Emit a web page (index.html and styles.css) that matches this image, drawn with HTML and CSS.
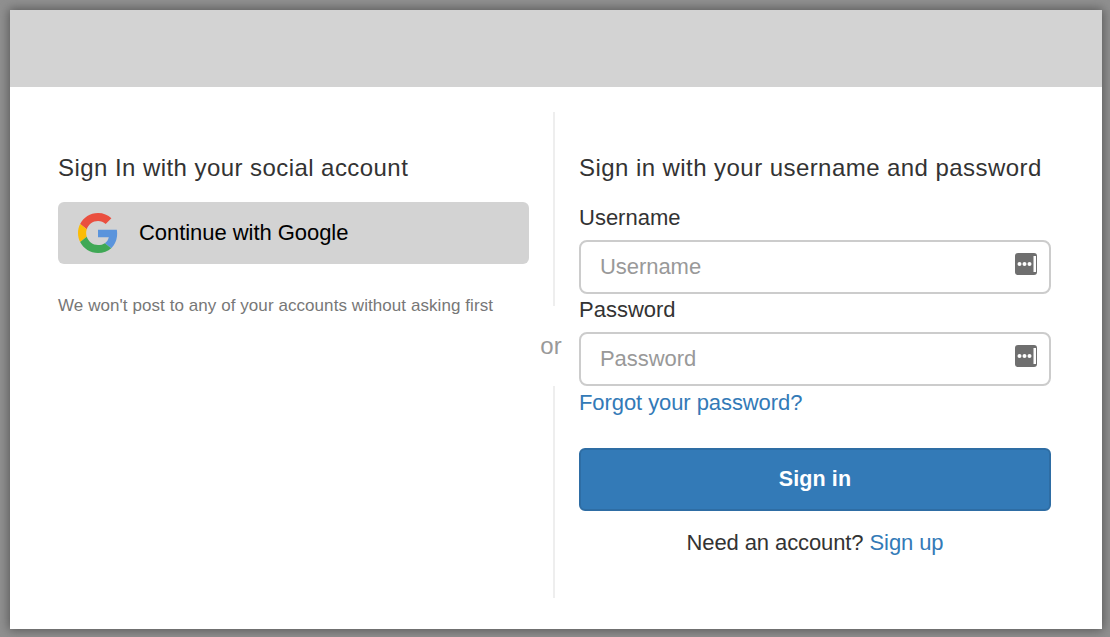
FILE: index.html
```html
<!DOCTYPE html>
<html lang="en">
<head>
  <meta charset="UTF-8" />
  <title>Sign in</title>
  <link rel="stylesheet" href="styles.css">
</head>
<body>

<div class="modal">
  <div class="banner"></div>

  <div class="modal-body">
    <section class="social">
      <h2>Sign In with your social account</h2>
      <button class="google-btn" type="button">
        <svg class="google-icon" viewBox="0 0 48 48" width="40" height="40">
          <path fill="#EA4F3F" d="M24 9.5c3.54 0 6.71 1.22 9.21 3.6l6.85-6.85C35.9 2.38 30.47 0 24 0 14.62 0 6.51 5.38 2.56 13.22l7.98 6.19C12.43 13.72 17.74 9.5 24 9.5z"/>
          <path fill="#5A94DC" d="M46.98 24.55c0-1.57-.15-3.09-.38-4.55H24v9.02h12.94c-.58 2.96-2.26 5.48-4.78 7.18l7.73 6c4.51-4.18 7.09-10.36 7.09-17.65z"/>
          <path fill="#FBBC05" d="M10.53 28.59c-.48-1.45-.76-2.99-.76-4.59s.27-3.14.76-4.59l-7.98-6.19C.92 16.46 0 20.12 0 24c0 3.88.92 7.54 2.56 10.78l7.97-6.19z"/>
          <path fill="#3FA855" d="M24 48c6.48 0 11.93-2.13 15.89-5.81l-7.73-6c-2.15 1.45-4.92 2.3-8.16 2.3-6.26 0-11.57-4.22-13.47-9.91l-7.98 6.19C6.51 42.62 14.62 48 24 48z"/>
        </svg>
        <span>Continue with Google</span>
      </button>
      <p class="note">We won't post to any of your accounts without asking first</p>
    </section>

    <div class="divider"><span class="or">or</span></div>

    <section class="login">
      <h2>Sign in with your username and password</h2>
      <form>
        <label for="username">Username</label>
        <div class="field">
          <input type="text" id="username" placeholder="Username" />
          <svg class="key-icon" viewBox="0 0 22 22" width="22" height="22">
            <rect width="22" height="22" rx="3" fill="#6f6f6f"/>
            <circle cx="4.5" cy="11" r="2" fill="#fff"/>
            <circle cx="9.5" cy="11" r="2" fill="#fff"/>
            <circle cx="14.5" cy="11" r="2" fill="#fff"/>
            <rect x="18.5" y="3" width="2.5" height="16" fill="#fff"/>
          </svg>
        </div>
        <label for="password">Password</label>
        <div class="field">
          <input type="password" id="password" placeholder="Password" />
          <svg class="key-icon" viewBox="0 0 22 22" width="22" height="22">
            <rect width="22" height="22" rx="3" fill="#6f6f6f"/>
            <circle cx="4.5" cy="11" r="2" fill="#fff"/>
            <circle cx="9.5" cy="11" r="2" fill="#fff"/>
            <circle cx="14.5" cy="11" r="2" fill="#fff"/>
            <rect x="18.5" y="3" width="2.5" height="16" fill="#fff"/>
          </svg>
        </div>
        <a class="forgot" href="#">Forgot your password?</a>
        <button class="submit-btn" type="submit">Sign in</button>
        <p class="signup">Need an account? <a href="#">Sign up</a></p>
      </form>
    </section>
  </div>
</div>

</body>
</html>
```

FILE: styles.css
```css
* { box-sizing: border-box; }

html, body {
  height: 100%;
}

body {
  margin: 0;
  padding: 10px 8px 8px 10px;
  background: #909090;
  font-family: "Liberation Sans", Arial, sans-serif;
  color: #333;
  overflow: hidden;
}

.modal {
  height: 619px;
  background: #fff;
  box-shadow: 0 0 10px 1px #555;
  display: flex;
  flex-direction: column;
}

.banner {
  height: 77px;
  background: #d3d3d3;
}

.modal-body {
  flex-grow: 1;
  display: flex;
  padding: 25px 51px 31px 48px;
}

.social {
  width: 471px;
  padding-top: 41px;
}

.login {
  width: 472px;
  padding-top: 41px;
}

h2 {
  margin: 0;
  font-size: 24px;
  font-weight: 400;
  line-height: 30px;
  letter-spacing: 0.44px;
}

.google-btn {
  width: 100%;
  height: 62px;
  margin-top: 19px;
  padding: 0 20px 1px;
  display: flex;
  align-items: center;
  gap: 21px;
  border: none;
  border-radius: 6px;
  background: #d3d3d3;
  color: #000;
  font-family: inherit;
  font-size: 22px;
  letter-spacing: -0.05px;
}

.note {
  margin: 32px 0 0;
  font-size: 17px;
  line-height: 20px;
  letter-spacing: 0.07px;
  color: #777;
}

.divider {
  position: relative;
  width: 2px;
  margin: 0 24px;
  background: #eee;
}

.or {
  position: absolute;
  top: 194px;
  left: -22px;
  width: 40px;
  height: 80px;
  padding-top: 26px;
  background: #fff;
  text-align: center;
  font-size: 24px;
  line-height: 28px;
  color: #999;
}

form {
  display: flex;
  flex-direction: column;
}

label {
  margin-top: 2px;
  font-size: 22px;
  line-height: 28px;
}

form label:first-child {
  margin-top: 21px;
}

.field {
  position: relative;
  margin-top: 8px;
}

input {
  display: block;
  width: 100%;
  height: 54px;
  padding: 0 50px 0 19px;
  border: 2px solid #ccc;
  border-radius: 8px;
  background: #fff;
  font-family: inherit;
  font-size: 22px;
  letter-spacing: -0.05px;
  color: #333;
}

input::placeholder {
  color: #999;
  opacity: 1;
}

.key-icon {
  position: absolute;
  top: 13px;
  right: 14px;
}

a {
  color: #337ab7;
  text-decoration: none;
}

.forgot {
  margin-top: 2px;
  font-size: 22px;
  line-height: 30px;
  letter-spacing: -0.08px;
}

.submit-btn {
  height: 63px;
  margin-top: 30px;
  border: 2px solid #2e6da4;
  border-radius: 6px;
  background: #337ab7;
  color: #fff;
  font-family: inherit;
  font-size: 21.5px;
  font-weight: 700;
  letter-spacing: 0.1px;
}

.signup {
  margin: 18px 0 0;
  font-size: 22px;
  line-height: 28px;
  letter-spacing: -0.1px;
  text-align: center;
}
```
